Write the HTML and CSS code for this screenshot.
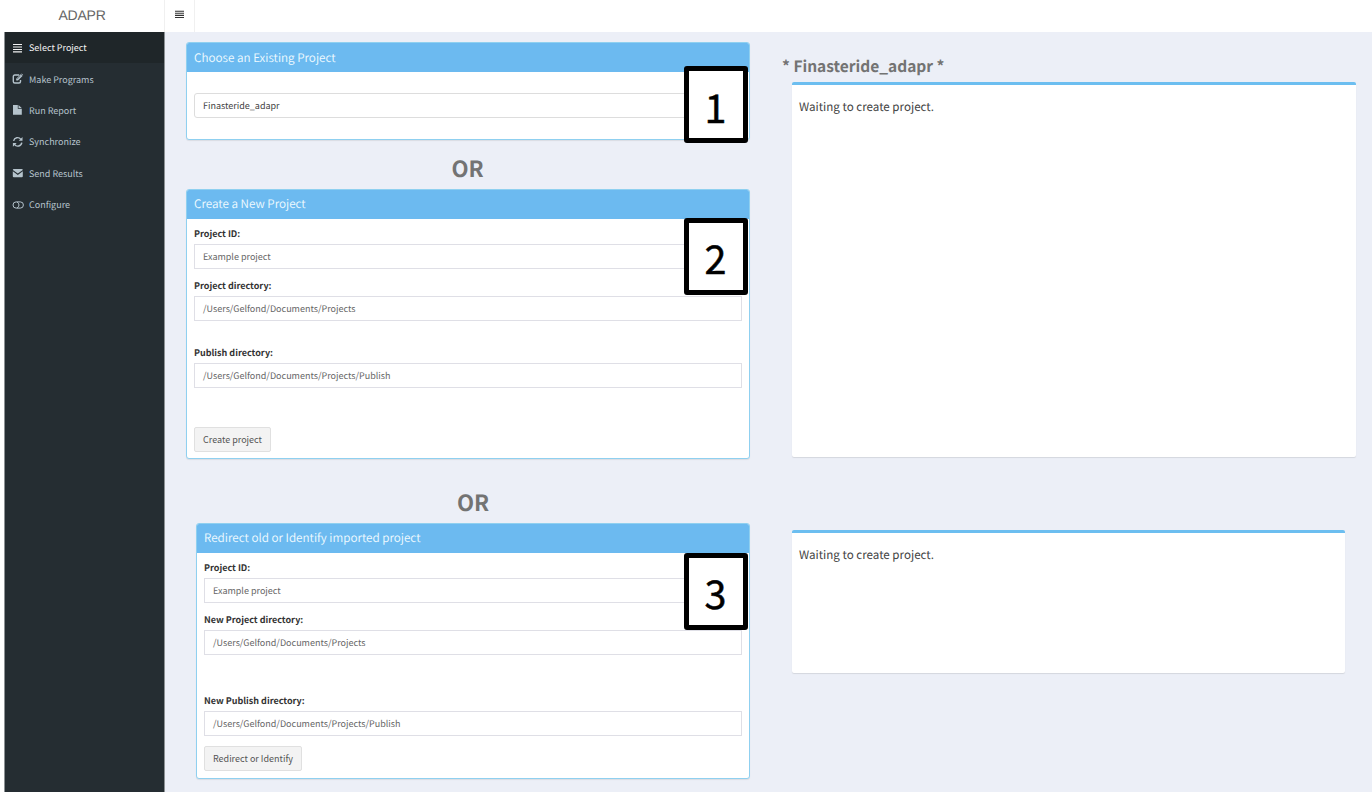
FILE: index.html
```html
<!DOCTYPE html>
<html lang="en">
<head>
<meta charset="utf-8">
<title>ADAPR</title>
<link rel="stylesheet" href="styles.css">
</head>
<body>
<header class="topbar">
  <div class="brand"><span>ADAPR</span></div>
  <div class="toggle"><svg width="9" height="9" viewBox="0 0 9 9"><path d="M0 1.2h9M0 3.3h9M0 5.4h9M0 7.5h9" stroke="#333" stroke-width="1.1"/></svg></div>
</header>
<div class="shell">
  <nav class="sidebar">
    <a class="item active"><svg class="ico" viewBox="0 0 12 12"><path d="M1 2.5h9M1 5h9M1 7.5h9M1 9.8h9" stroke="currentColor" stroke-width="1.2"/></svg><span>Select Project</span></a>
    <a class="item"><svg class="ico" viewBox="0 0 12 12"><path d="M7.2 2H2.8Q1.3 2 1.3 3.5V8.5Q1.3 10 2.8 10H7Q8.5 10 8.5 8.5V7" fill="none" stroke="currentColor" stroke-width="1.4"/><path d="M4.2 5.8 8.7 1.3 10.5 3.1 6 7.6H4.2z" fill="currentColor"/><path d="M9.2 1 9.7.6 11.2 2.1 10.8 2.6z" fill="currentColor"/><path d="M5.2 6 8.5 2.7" stroke="#252d32" stroke-width=".5"/></svg><span>Make Programs</span></a>
    <a class="item"><svg class="ico" viewBox="0 0 12 12"><path d="M1 1h4.8v3.8h4v6H1z" fill="currentColor"/><path d="M6.5 1 9.7 4.1H6.5z" fill="currentColor"/></svg><span>Run Report</span></a>
    <a class="item"><svg class="ico" viewBox="0 0 12 12"><path d="M1.6 4.8A4 4 0 0 1 8.8 3.4M9.8 6.7A4 4 0 0 1 2.5 8.3" fill="none" stroke="currentColor" stroke-width="1.4"/><path d="M10.5 1v3.8H6.7zM.9 10.7V6.9h3.8z" fill="currentColor"/></svg><span>Synchronize</span></a>
    <a class="item"><svg class="ico" viewBox="0 0 12 12"><path d="M.8 3Q.8 2 1.8 2H9.7Q10.8 2 10.8 3L5.8 6.6z" fill="currentColor"/><path d="M.8 4.3 5.8 7.9 10.8 4.3V9.2Q10.8 10.2 9.8 10.2H1.8Q.8 10.2 .8 9.2z" fill="currentColor"/></svg><span>Send Results</span></a>
    <a class="item"><svg class="ico" viewBox="0 0 12 12"><rect x="1" y="2.9" width="10.4" height="6.2" rx="3.1" fill="none" stroke="currentColor"/><path d="M5 3Q7 4 7 6T5 9" fill="none" stroke="currentColor"/></svg><span>Configure</span></a>
  </nav>
  <main class="content">
    <section class="left">
      <div class="card choose">
        <h3 class="card-title">Choose an Existing Project</h3>
        <div class="card-body"><div class="field select">Finasteride_adapr</div></div>
        <div class="step">1</div>
      </div>
      <div class="or first">OR</div>
      <div class="card create">
        <h3 class="card-title">Create a New Project</h3>
        <div class="card-body">
          <label>Project ID:</label><div class="field">Example project</div>
          <label class="gap-s">Project directory:</label><div class="field">/Users/Gelfond/Documents/Projects</div>
          <label class="gap-m">Publish directory:</label><div class="field">/Users/Gelfond/Documents/Projects/Publish</div>
          <button class="btn create-btn">Create project</button>
        </div>
        <div class="step">2</div>
      </div>
      <div class="or second">OR</div>
      <div class="card redirect">
        <h3 class="card-title">Redirect old or Identify imported project</h3>
        <div class="card-body">
          <label>Project ID:</label><div class="field">Example project</div>
          <label class="gap-s">New Project directory:</label><div class="field">/Users/Gelfond/Documents/Projects</div>
          <label class="gap-l">New Publish directory:</label><div class="field">/Users/Gelfond/Documents/Projects/Publish</div>
          <button class="btn redirect-btn">Redirect or Identify</button>
        </div>
        <div class="step">3</div>
      </div>
    </section>
    <section class="right">
      <h2 class="project"><span>* Finasteride_adapr *</span></h2>
      <div class="panel tall">Waiting to create project.</div>
      <div class="panel short">Waiting to create project.</div>
    </section>
  </main>
</div>
</body>
</html>
```
FILE: styles.css
```css
* { box-sizing: border-box; }
body {
  margin: 0;
  height: 795px;
  overflow: hidden;
  background: #fff;
  color: #444;
  font-family: "Noto Sans CJK SC", "Noto Sans", sans-serif;
  font-size: 9px;
  text-rendering: geometricPrecision;
}
.topbar { display: flex; height: 32px; }
.brand {
  width: 165px;
  border-right: 1px solid #f0f0f0;
  font: 14px/30px "Liberation Sans", sans-serif;
  letter-spacing: -.2px;
  color: #666;
  text-align: center;
}
.toggle {
  display: flex;
  width: 30px;
  padding: 10px 0 0 10px;
  border-right: 1px solid #f0f0f0;
}
.shell { display: flex; height: 760px; padding-left: 4px; }
.sidebar { width: 161px; background: #252d32; border-left: 1px solid #8c9194; border-right: 1px solid #8c9194; }
.item {
  display: flex;
  align-items: center;
  height: 31.4px;
  padding-left: 7px;
  color: #b5c3cc;
}
.item span { margin-left: 5px; }
.active { background: #1f2629; color: #f4f4f4; }
.ico { width: 12px; height: 12px; }
.content { display: flex; flex: 1; background: #eceff7; padding: 10px 0 0 21px; }
.left { width: 564px; }
.card {
  position: relative;
  background: #fff;
  border: 1px solid #8fd0f0;
  border-radius: 3px;
  box-shadow: 0 1px 1px rgba(0, 0, 0, .08);
}
.card-title {
  margin: 0;
  height: 29px;
  padding-left: 7px;
  background: #6cbaf0;
  border-radius: 2px 2px 0 0;
  color: #f0faff;
  font-size: 11.7px;
  font-weight: 350;
  line-height: 27px;
}
.choose .card-title { line-height: 29px; }
.card-body { padding: 4px 7px 0; }
.choose { height: 98px; }
.choose .card-body { padding-top: 21px; }
.create { height: 270px; }
.redirect { height: 256px; margin-left: 10px; }
label {
  display: block;
  height: 21px;
  color: #333;
  font-weight: 700;
  line-height: 21px;
}
.gap-s, .gap-m, .gap-l { line-height: 22px; }
.field {
  height: 25px;
  padding-left: 8px;
  border: 1px solid #dfdfe6;
  color: #666;
  line-height: 23px;
}
.select { border-color: #ddd; border-radius: 3px; color: #444; }
.gap-s { margin-top: 6px; }
.gap-m { margin-top: 21px; }
.gap-l { margin-top: 35px; }
.btn {
  display: block;
  height: 25px;
  padding: 0;
  border: 1px solid #e0e0e0;
  border-radius: 2px;
  background: #f3f3f3;
  color: #555;
  font: inherit;
  line-height: 23px;
}
.create-btn { width: 77px; margin-top: 39px; }
.redirect-btn { width: 98px; margin-top: 10px; }
.or { font-size: 22.2px; font-weight: 700; color: #737373; text-align: center; }
.first { height: 49px; padding-right: 1px; line-height: 56px; }
.second { height: 64px; padding-left: 10px; line-height: 86px; }
.step {
  position: absolute;
  right: 1px;
  width: 64px;
  height: 77px;
  padding-right: 1px;
  border: 5px solid #000;
  border-radius: 3px;
  background: #fff;
  color: #000;
  font-size: 39.5px;
  line-height: 69px;
  text-align: center;
  -webkit-text-stroke: .5px #000;
}
.choose .step { top: 23px; line-height: 71px; }
.create .step { top: 28px; }
.redirect .step { top: 29px; }
.right { width: 564px; margin-left: 42px; }
.project {
  height: 40px;
  margin: 0 0 0 -10px;
  color: #737373;
  font-size: 15.5px;
  font-weight: 700;
  line-height: 48px;
}
.panel {
  padding: 12px 7px;
  border-top: 3px solid #6cbef0;
  border-radius: 2px;
  background: #fff;
  box-shadow: 0 1px 1px rgba(0, 0, 0, .1);
  font-size: 11.6px;
  line-height: 20px;
}
.tall { height: 375px; }
.short { width: 553px; height: 143px; margin-top: 73px; }
```
